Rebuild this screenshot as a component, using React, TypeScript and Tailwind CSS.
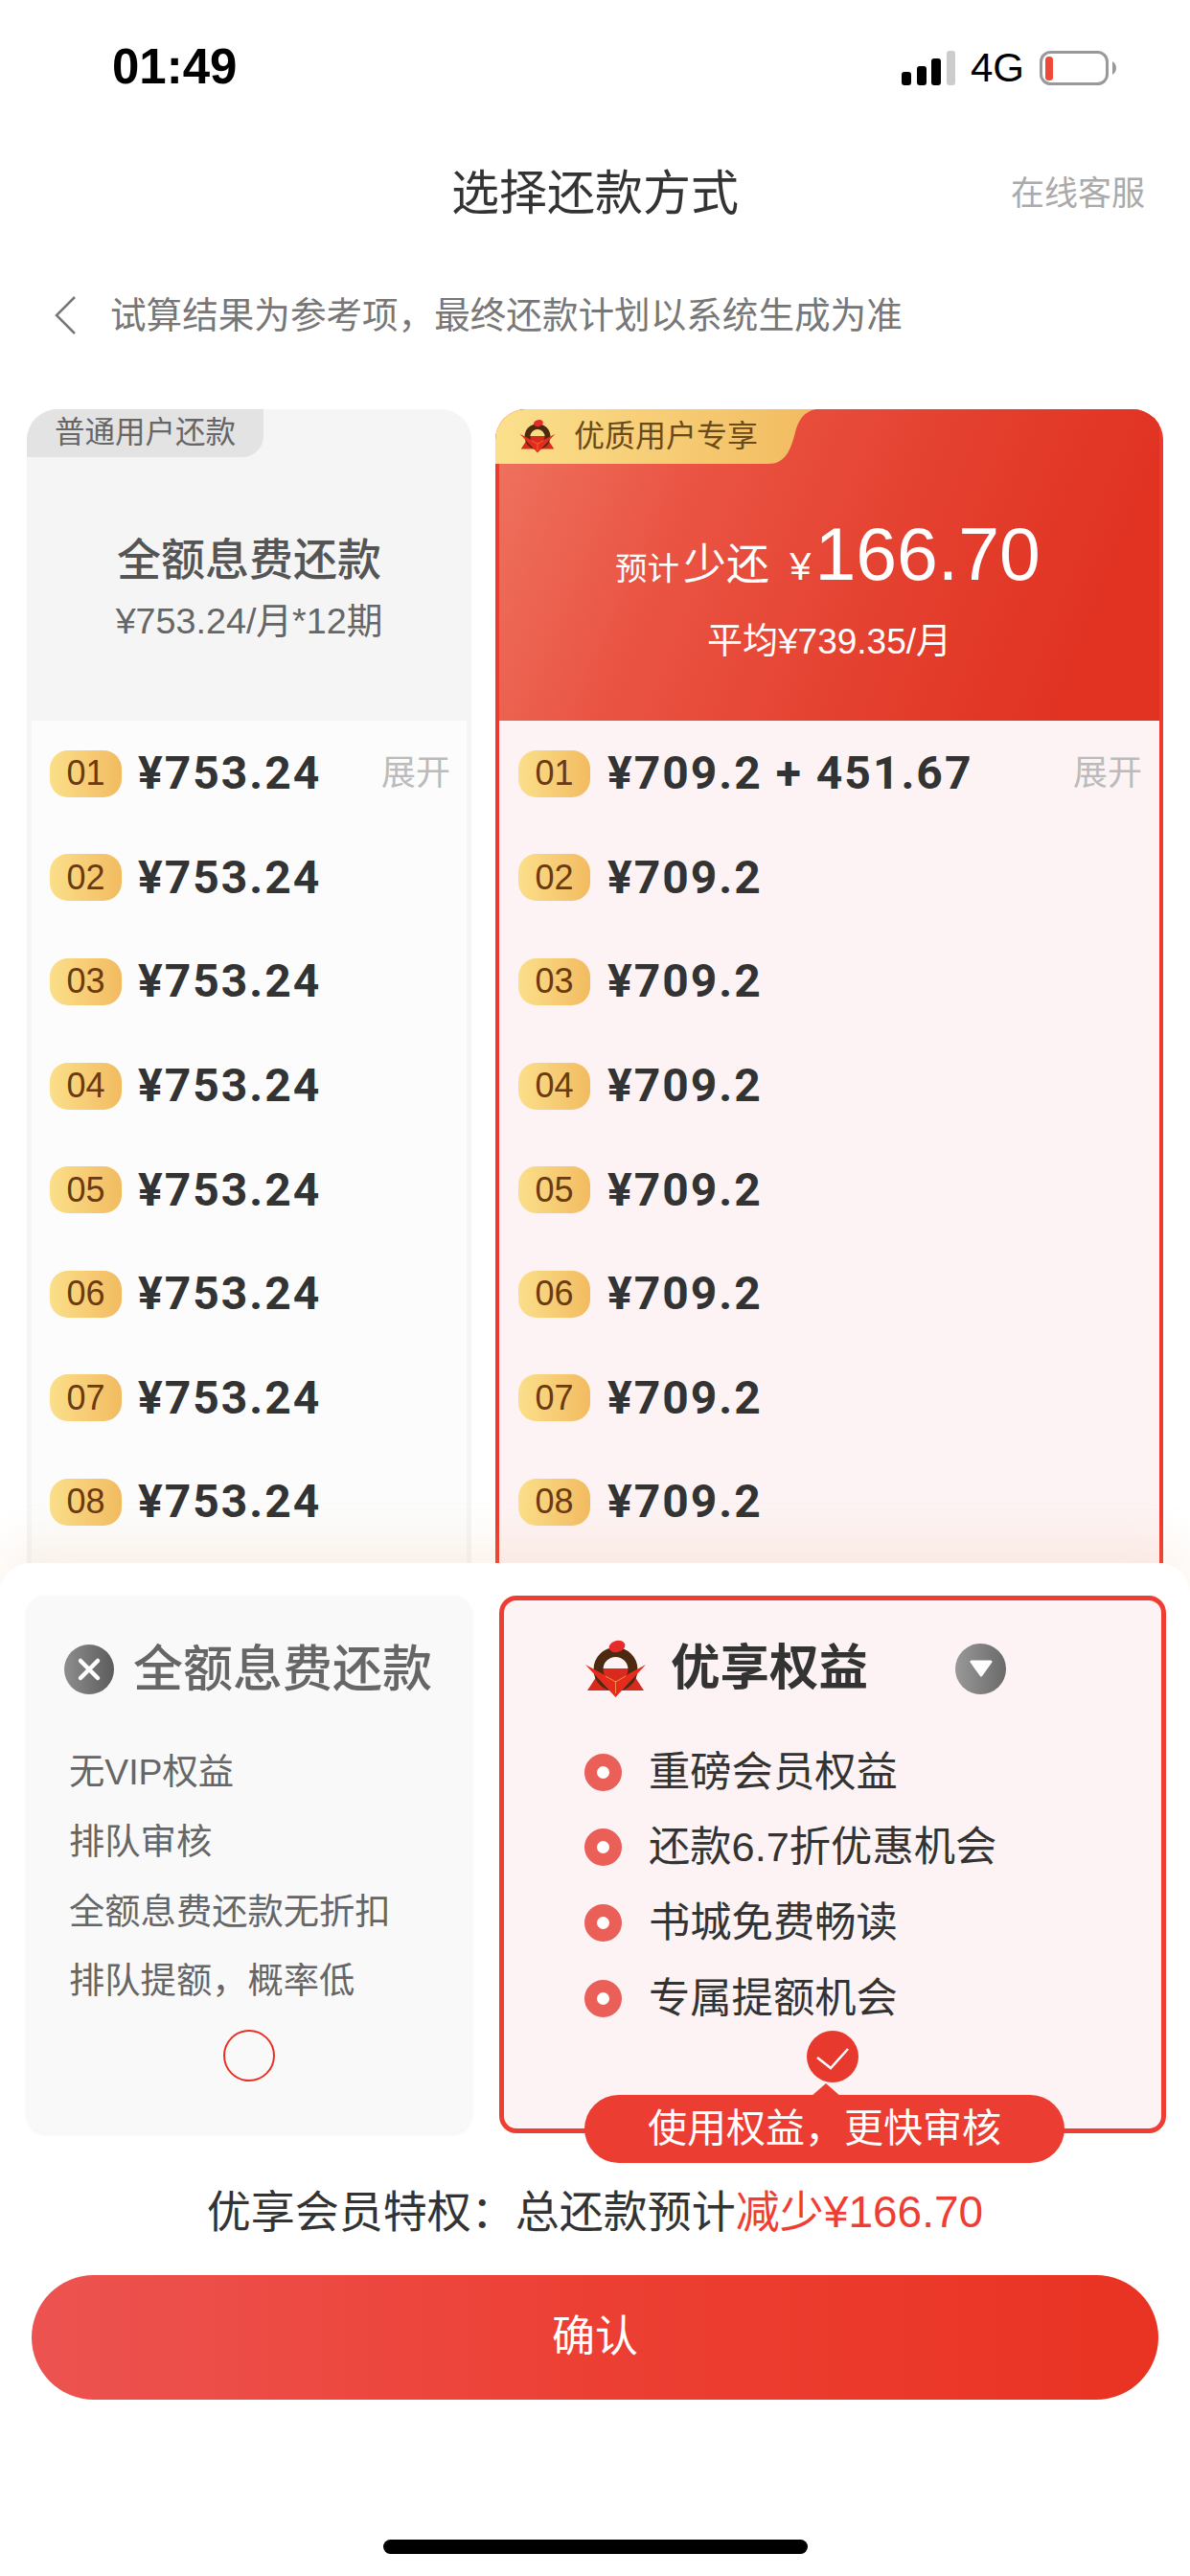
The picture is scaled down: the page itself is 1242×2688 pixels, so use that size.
import React from 'react';

const leftRows = ['01', '02', '03', '04', '05', '06', '07', '08'];

function Logo({ className }: { className: string }) {
    return (
        <svg viewBox="0 0 65 60" className={className}>
            <polygon points="3,53 62,53 47,30 18,30" fill="#d92a1e" />
            <circle cx="32.5" cy="31" r="18" fill="none" stroke="#4b2a10" strokeWidth="10" />
            <ellipse cx="34" cy="7" rx="8.5" ry="6" fill="#e62b2b" transform="rotate(-15 34 7)" />
            <polygon points="1,26 32.5,43 64,26 32.5,60" fill="#e62b1e" />
            <path d="M32.5 43V56M22 38L32.5 44L43 38" fill="none" stroke="#f0a94e" strokeWidth="0.8" />
        </svg>
    );
}

function Badge({ n }: { n: string }) {
    return (
        <span className="flex items-center justify-center w-[75px] h-[49px] rounded-[19px] bg-linear-to-r from-[#fbdf8a] to-[#f2bb60] text-[36px] text-[#6b3a10] shrink-0">
            {n}
        </span>
    );
}

function Row({ n, amount, gap, expand }: { n: string; amount: string; gap: string; expand: boolean }) {
    return (
        <div className={`flex items-center h-[108.6px] ${gap}`}>
            <Badge n={n} />
            <span className="[font-family:Roboto,sans-serif] font-bold text-[48px] tracking-[2px] text-[#333] flex-1 whitespace-nowrap">
                {amount}
            </span>
            {expand && <span className="text-[36px] text-[#bbb]">展开</span>}
        </div>
    );
}

export default function App() {
    return (
        <div className="w-[1242px] h-[2688px] flex flex-col overflow-hidden bg-white [font-family:'Liberation_Sans','Noto_Sans_CJK_SC',sans-serif]">
            {/* barra de status */}
            <div className="h-[140px] shrink-0 flex items-center justify-between pl-[117px] pr-[77px] pt-[1px]">
                <span className="text-[51px] font-bold text-black">01:49</span>
                <div className="flex items-center gap-[16px]">
                    <svg width="56" height="36" viewBox="0 0 56 36">
                        <rect x="0" y="22" width="10" height="14" rx="3" fill="#000" />
                        <rect x="16" y="16" width="10" height="20" rx="3" fill="#000" />
                        <rect x="31" y="8" width="10" height="28" rx="3" fill="#000" />
                        <rect x="47" y="0" width="9" height="36" rx="3" fill="#ccc" />
                    </svg>
                    <span className="text-[42px] text-black leading-none">4G</span>
                    <svg width="80" height="36" viewBox="0 0 80 36">
                        <rect x="1.5" y="1.5" width="69" height="33" rx="10" fill="none" stroke="#999" strokeWidth="3" />
                        <rect x="6" y="6" width="8" height="25" rx="3.5" fill="#ee4a38" />
                        <path d="M76 11C79 13 80 15.5 80 18C80 20.5 79 23 76 25Z" fill="#999" />
                    </svg>
                </div>
            </div>

            {/* titulo */}
            <div className="h-[124px] shrink-0 grid grid-cols-[1fr_auto_1fr] items-center">
                <span />
                <span className="text-[50px] text-[#333]">选择还款方式</span>
                <span className="text-right pr-[47px] text-[35px] text-[#aaa]">在线客服</span>
            </div>

            <div className="h-[130px] shrink-0 flex items-center pl-[57px] gap-[36px]">
                <svg width="22" height="40" viewBox="0 0 22 40">
                    <polyline points="21,1 2,20 21,39" fill="none" stroke="#777" strokeWidth="2.5" />
                </svg>
                <span className="text-[37.6px] text-[#777] whitespace-nowrap">{'试算结果为参考项\uFF0C最终还款计划以系统生成为准'}</span>
            </div>

            {/* cartoes de comparacao */}
            <div className="flex-1 min-h-0 overflow-hidden flex pt-[33px] pl-[28px] gap-[25px]">
                <div className="relative w-[464px] rounded-t-[32px] bg-[#f5f5f5] px-[5px]">
                    <div className="absolute top-0 left-0 w-[247px] h-[50px] rounded-tl-[32px] rounded-br-[22px] bg-[#e3e3e3] pl-[29px] flex items-center text-[31.5px] text-[#666]">
                        普通用户还款
                    </div>
                    <div className="h-[325px] flex flex-col items-center pt-[127px]">
                        <span className="text-[46px] leading-[60px] font-medium text-[#555]">全额息费还款</span>
                        <span className="text-[37.7px] leading-[44px] mt-[12px] text-[#666]">¥753.24/月*12期</span>
                    </div>
                    <div className="bg-[#fcfcfc] h-full pt-[1px]">
                        {leftRows.map((n, i) => (
                            <Row key={n} n={n} amount="¥753.24" gap="pl-[19px] pr-[17px] gap-[17px]" expand={i === 0} />
                        ))}
                    </div>
                </div>

                <div className="relative w-[697px] rounded-t-[32px] bg-[#ee3a2e] px-[4px] overflow-hidden">
                    <svg width="335" height="57" viewBox="0 0 335 57" className="absolute top-0 left-0 z-10">
                        <defs>
                            <linearGradient id="tag" x1="0" y1="0" x2="1" y2="0">
                                <stop offset="0" stopColor="#fbe08c" />
                                <stop offset="1" stopColor="#f2bb60" />
                            </linearGradient>
                        </defs>
                        <path d="M0 57V32Q0 0 32 0H335C322 2 316 12 313 24C308 44 302 57 285 57Z" fill="url(#tag)" />
                    </svg>
                    <div className="absolute z-10 top-[10px] left-[25px] flex items-center gap-[19px] h-[36px]">
                        <Logo className="w-[38px] h-[36px]" />
                        <span className="text-[32px] text-[#6b4a1a] whitespace-nowrap">优质用户专享</span>
                    </div>
                    <div className="h-[325px] flex flex-col items-center pt-[105px] text-white bg-[linear-gradient(112deg,#ee7460_0%,#ea5443_28%,#e4402f_60%,#e13222_88%)]">
                        <div className="flex items-baseline h-[92px] pr-[3px]">
                            <span className="text-[33.5px]">预计</span>
                            <span className="text-[45px] ml-[4px]">少还</span>
                            <span className="text-[40px] ml-[21px]">¥</span>
                            <span className="text-[77px] leading-[92px] ml-[4px]">166.70</span>
                        </div>
                        <span className="text-[37px] leading-[44px] mt-[24px]">平均¥739.35/月</span>
                    </div>
                    <div className="bg-[#fdf3f4] h-full pt-[1px]">
                        {leftRows.map((n, i) => (
                            <Row
                                key={n}
                                n={n}
                                amount={i === 0 ? '¥709.2 + 451.67' : '¥709.2'}
                                gap="pl-[20px] pr-[18px] gap-[18px]"
                                expand={i === 0}
                            />
                        ))}
                    </div>
                </div>
            </div>

            {/* painel inferior */}
            <div className="relative z-20 h-[1057px] shrink-0 bg-white rounded-t-[32px] shadow-[0_-24px_44px_rgba(235,175,120,0.14)] pt-[34px] flex flex-col">
                <div className="flex pl-[28px] gap-[29px] h-[561px] shrink-0">
                    <div className="w-[464px] rounded-[20px] bg-[#f9f9f9] shadow-[0_1px_4px_rgba(0,0,0,0.06)] pt-[51px]">
                        <div className="flex items-center pl-[39px] gap-[20px] h-[52px]">
                            <span className="flex items-center justify-center w-[52px] h-[52px] rounded-full bg-linear-to-r from-[#8e8e8e] to-[#5c5c5c]">
                                <svg width="26" height="26" viewBox="0 0 26 26">
                                    <path d="M4 4L22 22M22 4L4 22" stroke="#fff" strokeWidth="4.5" strokeLinecap="round" />
                                </svg>
                            </span>
                            <span className="text-[52px] font-medium text-[#666] whitespace-nowrap">全额息费还款</span>
                        </div>
                        <div className="mt-[46px] pl-[44px] text-[37.3px] text-[#666]">
                            {['无VIP权益', '排队审核', '全额息费还款无折扣', '排队提额\uFF0C概率低'].map((t) => (
                                <div key={t} className="h-[72.7px] flex items-center">{t}</div>
                            ))}
                        </div>
                        <div className="mt-[13px] mx-auto w-[54px] h-[54px] rounded-full border-[2.5px] border-[#ea2f25]" />
                    </div>

                    <div className="relative w-[696px] rounded-[18px] border-[5px] border-[#ee3d33] bg-[#fdf3f4] pt-[41px]">
                        <div className="flex items-center pl-[84px] h-[60px]">
                            <Logo className="w-[65px] h-[60px]" />
                            <span className="ml-[25px] text-[51.5px] font-bold text-[#333] whitespace-nowrap">优享权益</span>
                            <span className="ml-[91px] flex items-center justify-center w-[53px] h-[53px] rounded-full bg-linear-to-r from-[#999] to-[#6a6a6a]">
                                <svg width="26" height="20" viewBox="0 0 26 20">
                                    <path d="M3 3H23L13 17Z" fill="#fff" stroke="#fff" strokeWidth="3" strokeLinejoin="round" />
                                </svg>
                            </span>
                        </div>
                        <div className="mt-[39px]">
                            {['重磅会员权益', '还款6.7折优惠机会', '书城免费畅读', '专属提额机会'].map((t) => (
                                <div key={t} className="h-[78.6px] flex items-center pl-[84px] gap-[28px] text-[43.3px] text-[#333]">
                                    <span className="w-[39px] h-[39px] rounded-full border-[13px] border-[#eb5f59] bg-white shrink-0" />
                                    {t}
                                </div>
                            ))}
                        </div>
                        <div className="-mt-[5.7px] mx-auto w-[54px] h-[54px] rounded-full bg-[#e8392e]">
                            <svg width="54" height="54" viewBox="0 0 54 54">
                                <polyline points="11,28 25,39 43,19" fill="none" stroke="#fff" strokeWidth="2.5" />
                            </svg>
                        </div>
                        <div className="absolute left-[84px] top-[516px] w-[501px] h-[71px] rounded-full bg-[#ec3d33] flex items-center justify-center text-[41px] text-white whitespace-nowrap">
                            <svg width="32" height="14" viewBox="0 0 32 14" className="absolute -top-[12px] left-[236px]">
                                <polygon points="16,0 32,14 0,14" fill="#ec3d33" />
                            </svg>
                            {'使用权益\uFF0C更快审核'}
                        </div>
                    </div>
                </div>

                <div className="mt-[52px] h-[60px] flex items-center justify-center text-[46px] text-[#333] whitespace-nowrap">
                    {'优享会员特权\uFF1A总还款预计'}<span className="text-[#ee3d33]">减少¥166.70</span>
                </div>

                <div className="mt-[36px] mx-[33px] h-[130px] rounded-full bg-linear-to-r from-[#ec5350] via-[#ec3f33] to-[#e93322] flex items-center justify-center text-[45px] text-white">
                    确认
                </div>

                <div className="mt-[146px] mx-auto w-[443px] h-[15px] rounded-full bg-black" />
            </div>
        </div>
    );
}
